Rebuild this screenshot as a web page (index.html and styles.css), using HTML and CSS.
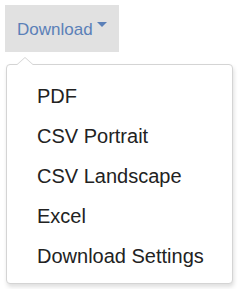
FILE: index.html
```html
<!DOCTYPE html>
<html lang="en">
<head>
    <meta charset="UTF-8">
    <title>Download Menu</title>
    <link rel="stylesheet" href="styles.css">
</head>
<body>
    <div class="download">
        <button class="download-btn" type="button">
            <span class="label">Download</span>
            <span class="caret"></span>
        </button>

        <ul class="menu">
            <li class="menu-item">PDF</li>
            <li class="menu-item">CSV Portrait</li>
            <li class="menu-item">CSV Landscape</li>
            <li class="menu-item">Excel</li>
            <li class="menu-item">Download Settings</li>
        </ul>
    </div>
</body>
</html>
```

FILE: styles.css
```css
body {
    margin: 0;
    padding: 5px;
    background-color: #ffffff;
    font-family: 'Liberation Sans', Arial, sans-serif;
}
.download {
    width: 228px;
    margin-left: 0;
}
.download-btn {
    display: flex;
    align-items: flex-start;
    gap: 4px;
    height: 47px;
    padding: 15px 12px 13px 12px;
    border: none;
    border-radius: 0;
    background-color: #e1e1e1;
    color: #5b80b8;
    font-family: inherit;
    font-size: 17px;
    line-height: 19px;
    cursor: pointer;
}
.caret {
    width: 0;
    height: 0;
    margin-top: 2px;
    border-top: 5px solid #5b80b8;
    border-left: 5px solid transparent;
    border-right: 5px solid transparent;
}
.menu {
    position: relative;
    list-style: none;
    margin: 12px 0 0 1px;
    padding: 11px 0 7px 30px;
    border: 1px solid #d4d4d4;
    border-radius: 4px;
    background-color: #ffffff;
    box-shadow: 1px 3px 4px rgba(0, 0, 0, 0.13);
}
.menu::before,
.menu::after {
    content: "";
    position: absolute;
    width: 0;
    height: 0;
    border-left: 9px solid transparent;
    border-right: 9px solid transparent;
}
.menu::before {
    top: -8px;
    left: 9px;
    border-bottom: 8px solid #d4d4d4;
}
.menu::after {
    top: -7px;
    left: 9px;
    border-bottom: 8px solid #ffffff;
}
.menu-item {
    font-size: 20px;
    line-height: 40px;
    color: #222222;
}
```
